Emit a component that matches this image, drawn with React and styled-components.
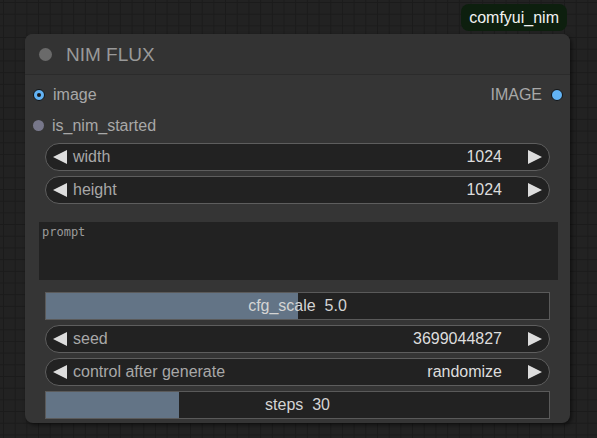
import React from "react";
import styled, { createGlobalStyle } from "styled-components";

const Global = createGlobalStyle`
  html, body {
    margin: 0;
    padding: 0;
  }
  body {
    width: 597px;
    height: 438px;
    overflow: hidden;
    background-color: #222;
    background-image:
      linear-gradient(to right, #1b1b1b 1px, transparent 1px),
      linear-gradient(to bottom, #1b1b1b 1px, transparent 1px);
    background-size: 11.7px 11.7px;
    background-position: 3px 2px;
    font-family: Arial, "Liberation Sans", sans-serif;
  }
`;

const Canvas = styled.div`
  padding: 34px 0 0 25px;
  box-sizing: border-box;
  height: 438px;
`;

const NodeWrap = styled.div`
  position: relative;
  width: 545px;
`;

const Badge = styled.div`
  position: absolute;
  right: 3px;
  top: -30px;
  height: 27px;
  padding: 0 8px;
  display: flex;
  align-items: center;
  background: #0d1f0e;
  border-radius: 8px;
  color: #f2f2f2;
  font-size: 16px;
`;

const Node = styled.div`
  background: #353535;
  border-radius: 8px;
  box-shadow: 2px 2px 4px rgba(0, 0, 0, 0.55);
  display: flex;
  flex-direction: column;
  padding-bottom: 4px;
  overflow: hidden;
`;

const TitleBar = styled.div`
  height: 41px;
  display: flex;
  align-items: center;
  gap: 14px;
  padding-left: 14px;
  padding-top: 1px;
  box-sizing: border-box;
  background: #333;
  border-bottom: 1px solid #2b2b2b;
`;

const TitleDot = styled.div`
  width: 13px;
  height: 13px;
  border-radius: 50%;
  background: #6a6a6a;
`;

const Title = styled.div`
  color: #999;
  font-size: 19px;
`;

const Slots = styled.div`
  display: flex;
  flex-direction: column;
  padding-top: 4px;
`;

const SlotRow = styled.div`
  height: 31px;
  display: flex;
  align-items: center;
  padding: 0 7px 0 8px;
`;

const SlotSide = styled.div`
  display: flex;
  align-items: center;
  gap: ${(p) => (p.$right ? "9px" : "8px")};
  margin-left: ${(p) => (p.$right ? "auto" : "0")};
`;

const SlotDot = styled.div`
  width: ${(p) => p.$size}px;
  height: ${(p) => p.$size}px;
  border-radius: 50%;
  box-sizing: border-box;
  background: ${(p) => p.$color};
  border: ${(p) => (p.$ring ? "1.5px solid #111" : "none")};
  display: flex;
  align-items: center;
  justify-content: center;
`;

const SlotCore = styled.div`
  width: 4px;
  height: 4px;
  border-radius: 50%;
  background: #1a1a1a;
`;

const SlotLabel = styled.span`
  color: #a8a8a8;
  font-size: 16px;
`;

const WidgetGroup = styled.div`
  display: flex;
  flex-direction: column;
  gap: 5px;
  padding: 0 20px;
  margin-top: ${(p) => p.$top}px;
`;

const NumberWidget = styled.div`
  height: 28px;
  box-sizing: border-box;
  border: 1px solid #5e5e5e;
  border-radius: 14px;
  background: #222;
  display: flex;
  align-items: center;
  padding: 0 7px;
  font-size: 16px;
`;

const Arrow = styled.svg`
  width: 14px;
  height: 14px;
  flex: none;
  fill: #ddd;
`;

const WLabel = styled.span`
  color: #a8a8a8;
  margin-left: 6px;
  flex: 1;
`;

const WValue = styled.span`
  color: #ddd;
  margin-right: 26px;
`;

const SliderWidget = styled.div`
  position: relative;
  height: 28px;
  box-sizing: border-box;
  border: 1px solid #5a5a5a;
  background: #222;
  display: flex;
  align-items: center;
  justify-content: center;
  font-size: 16px;
  color: #d4d4d4;
  white-space: pre;
`;

const SliderFill = styled.div`
  position: absolute;
  left: 0;
  top: 0;
  bottom: 0;
  background: #637486;
`;

const SliderText = styled.span`
  position: relative;
`;

const PromptArea = styled.textarea`
  display: block;
  margin: 18px 12px 0 14px;
  height: 58px;
  box-sizing: border-box;
  border: none;
  outline: none;
  resize: none;
  background: #222;
  padding: 3px 3px;
  font-family: "DejaVu Sans Mono", "Liberation Mono", monospace;
  font-size: 12px;
  color: #ccc;
  &::placeholder {
    color: #9a9a9a;
  }
`;

const LeftArrow = () => (
  <Arrow viewBox="0 0 14 14">
    <polygon points="14,0 0,7 14,14" />
  </Arrow>
);
const RightArrow = () => (
  <Arrow viewBox="0 0 14 14">
    <polygon points="0,0 14,7 0,14" />
  </Arrow>
);

const Number = ({ label, value }) => (
  <NumberWidget>
    <LeftArrow />
    <WLabel>{label}</WLabel>
    <WValue>{value}</WValue>
    <RightArrow />
  </NumberWidget>
);

const Slider = ({ label, value, frac }) => (
  <SliderWidget>
    <SliderFill style={{ width: `${frac * 100}%` }} />
    <SliderText>{`${label}  ${value}`}</SliderText>
  </SliderWidget>
);

export default function App() {
  return (
    <>
      <Global />
      <Canvas>
        <NodeWrap>
          <Badge>comfyui_nim</Badge>
          <Node>
            <TitleBar>
              <TitleDot />
              <Title>NIM FLUX</Title>
            </TitleBar>
            <Slots>
              <SlotRow>
                <SlotSide>
                  <SlotDot $size={12} $color="#62b3f5" $ring>
                    <SlotCore />
                  </SlotDot>
                  <SlotLabel>image</SlotLabel>
                </SlotSide>
                <SlotSide $right>
                  <SlotLabel>IMAGE</SlotLabel>
                  <SlotDot $size={12} $color="#62b3f5" $ring />
                </SlotSide>
              </SlotRow>
              <SlotRow>
                <SlotSide>
                  <SlotDot $size={11} $color="#77778a" />
                  <SlotLabel>is_nim_started</SlotLabel>
                </SlotSide>
              </SlotRow>
            </Slots>
            <WidgetGroup $top={2}>
              <Number label="width" value="1024" />
              <Number label="height" value="1024" />
            </WidgetGroup>
            <PromptArea placeholder="prompt" readOnly />
            <WidgetGroup $top={12}>
              <Slider label="cfg_scale" value="5.0" frac={0.5} />
              <Number label="seed" value="3699044827" />
              <Number label="control after generate" value="randomize" />
              <Slider label="steps" value="30" frac={0.264} />
            </WidgetGroup>
          </Node>
        </NodeWrap>
      </Canvas>
    </>
  );
}
